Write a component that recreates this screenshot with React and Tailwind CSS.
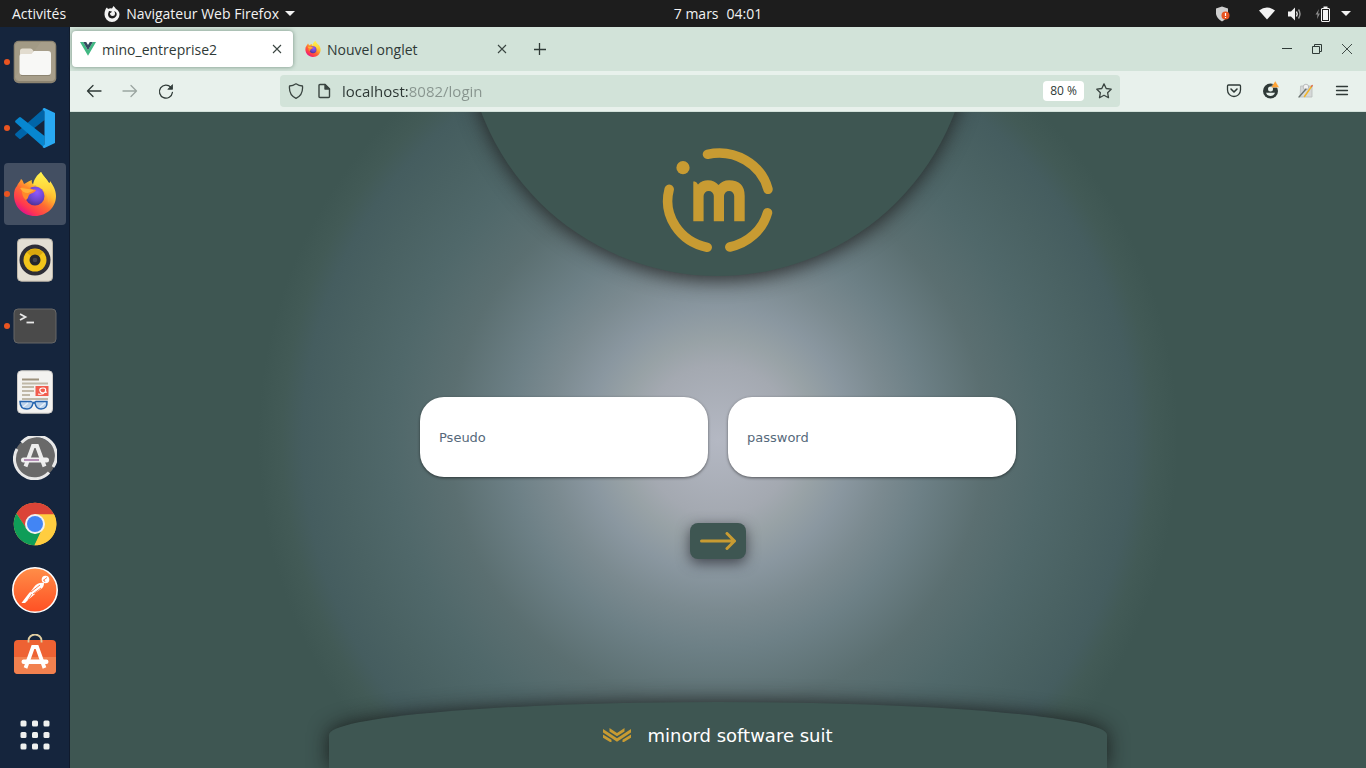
import React from 'react';

function VueLogo() {
  return (
    <svg viewBox="0 0 16 14" className="h-3.5 w-4 shrink-0" aria-hidden="true">
      <path d="M0 0h3.2L8 8.2 12.8 0H16L8 13.8z" fill="#41b883" />
      <path d="M3.2 0h3L8 3.1 9.8 0h3L8 8.3z" fill="#35495e" />
    </svg>
  );
}

function FirefoxLogo({ id, className }) {
  return (
    <svg viewBox="0 0 44 44" className={className} aria-hidden="true">
      <defs>
        <linearGradient id={id + 'a'} x1="0.85" y1="0.1" x2="0.25" y2="0.95">
          <stop offset="0" stopColor="#fff14f" />
          <stop offset="0.35" stopColor="#ffbd2e" />
          <stop offset="0.6" stopColor="#ff6a33" />
          <stop offset="0.85" stopColor="#ff3750" />
          <stop offset="1" stopColor="#e31587" />
        </linearGradient>
        <radialGradient id={id + 'b'} cx="0.6" cy="0.3" r="0.75">
          <stop offset="0" stopColor="#9059ff" />
          <stop offset="0.6" stopColor="#6b45c9" />
          <stop offset="1" stopColor="#4b2f8e" />
        </radialGradient>
        <linearGradient id={id + 'c'} x1="0.5" y1="0" x2="0.5" y2="1">
          <stop offset="0" stopColor="#fff44f" />
          <stop offset="0.6" stopColor="#ffd23a" />
          <stop offset="1" stopColor="#ff9a30" />
        </linearGradient>
      </defs>
      <path
        d="M4 14C5 11 7 10 8 7c2 1 2 3 3 5 3-1 4-3 8-4-1 3 1 5 5 6V8c1-4 3-6 4-8 2 4 6 7 8 11 1 0 1-1 1-2 3 4 6 9 6 15 0 11-9 20-21 20S1 35 1 23c0-4 1-7 3-9z"
        fill={'url(#' + id + 'a)'}
      />
      <path d="M20 13c1-6 4-10 8-13 2 5 8 8 9 15 2 5 2 12-2 16 1-9-5-16-15-18z" fill={'url(#' + id + 'c)'} />
      <circle cx="22" cy="24" r="9.500" fill={'url(#' + id + 'b)'} />
      <path d="M8 15c3-1 7 0 9 1 2 2 4 1 6 2-1 3-5 3-7 5-1 2-1 4-3 5-4-3-4-8-5-13z" fill="#ff8a2b" />
      <path d="M7 16c4 0 8 1 14 2-2 2-5 2-6 3-4 0-6-2-8-5z" fill="#ffb13b" />
    </svg>
  );
}

function FilesIcon() {
  return (
    <svg viewBox="0 0 44 44" className="size-11" aria-hidden="true">
      <rect x="0.7" y="0.7" width="42.600" height="42.600" rx="5" fill="#8c8471" />
      <rect x="2" y="2" width="40" height="39" rx="4" fill="#a29a85" />
      <path d="M28 2h10q4 0 4 4v31q0 4-4 4H6L2 37z" fill="#aaa28d" opacity="0.6" />
      <path d="M7 11q0-2.500 2.500-2.500h8q1.500 0 2.300 1.500l1.200 2H35v6H7z" fill="#e2dccf" />
      <path d="M6.500 16q0-2 2-2h10l2.500-3H35q3 0 3 3v18q0 3-3 3H9.500q-3 0-3-3z" fill="#f8f8f6" />
      <path d="M8 35.500h29" stroke="#8c8471" strokeWidth="1" />
    </svg>
  );
}

function CodeIcon() {
  return (
    <svg viewBox="0 0 44 44" className="size-11" aria-hidden="true">
      <path d="M31.500 2v12L8 32.500q-1 1-2 0l-3.500-3q-1-1 0-2z" fill="#0065a9" />
      <path d="M31.500 42V30L8 11.500q-1-1-2 0l-3.500 3q-1 1 0 2z" fill="#0787d0" />
      <path d="M31.500 2L42 7v30l-10.500 5q-1 0-2-1l2-2.500V5.500l-2-2.500q1-1 2-1z" fill="#29a9f3" />
    </svg>
  );
}

function RhythmboxIcon() {
  return (
    <svg viewBox="0 0 44 44" className="size-11" aria-hidden="true">
      <rect x="4.500" y="0.800" width="35" height="42.400" rx="4" fill="#e4dfd4" stroke="#bdb6a8" />
      <circle cx="22" cy="22" r="15.500" fill="#2e2e38" />
      <circle cx="22" cy="22" r="11.500" fill="#f3c51a" />
      <path d="M22 22L14 14.500A11 11 0 0 1 30 14.500z" fill="#d9a60d" />
      <circle cx="22" cy="22" r="5.500" fill="#25252b" />
      <circle cx="22" cy="22" r="2.300" fill="#44444c" />
    </svg>
  );
}

function TerminalIcon() {
  return (
    <svg viewBox="0 0 44 44" className="size-11" aria-hidden="true">
      <rect x="1" y="5" width="42" height="34" rx="4" fill="#4a4a4a" stroke="#666" />
      <path d="M7 10l5.500 3L7 16" fill="none" stroke="#e9e9e9" strokeWidth="1.800" />
      <path d="M13.500 18.500H21" stroke="#e9e9e9" strokeWidth="1.800" />
    </svg>
  );
}

function ReaderIcon() {
  return (
    <svg viewBox="0 0 44 44" className="size-11" aria-hidden="true">
      <rect x="4.500" y="0.800" width="35" height="42.400" rx="4" fill="#f3f2f0" stroke="#cfccc8" />
      <path d="M9 9.500h17" stroke="#9c917d" strokeWidth="2" />
      <path d="M9 13.500h26M9 17h12M9 21h12M9 25h8M9 29h26" stroke="#c0b8a8" strokeWidth="1.800" />
      <rect x="22.500" y="16" width="13" height="10" fill="#f15c4e" />
      <path d="M25 24q5 1 7-2 2-4-2-4-4 0-3 3t7 1" fill="none" stroke="#fff" strokeWidth="1.200" />
      <path d="M7 31.500h11q3 2 5 0h11q.5 7.500-6 7.500-5 0-6-6h-2q-1 6-6 6-7 0-7-7.500z" fill="#bcd2ea" stroke="#2564ae" strokeWidth="1.500" />
      <path d="M10 37l5-4M27 37l5-4" stroke="#e8f1fa" strokeWidth="1.500" />
    </svg>
  );
}

function UpdaterIcon() {
  return (
    <svg viewBox="0 0 44 44" className="size-11" aria-hidden="true">
      <circle cx="22" cy="22" r="21" fill="#696969" />
      <path d="M8.500 6.500A20 20 0 0 1 40 31M36 36.500A20 20 0 0 1 4 13" fill="none" stroke="#e8e8e8" strokeWidth="3" />
      <path d="M12.500 30.500L20 10h4l7.500 20.500" fill="none" stroke="#ececec" strokeWidth="4" />
      <rect x="8" y="21.500" width="28" height="5" rx="2.500" fill="#f0f0f0" />
      <path d="M11 24h15" stroke="#8d4f8f" strokeWidth="1.200" />
    </svg>
  );
}

function ChromeIcon() {
  return (
    <svg viewBox="0 0 44 44" className="size-11" aria-hidden="true">
      <circle cx="22" cy="22" r="21.300" fill="#ffcd40" />
      <path d="M3.500 11.500A21.300 21.300 0 0 1 41 12.500H22L13.500 27z" fill="#db4437" />
      <path d="M3.500 11.500L13.800 27l8.200 5 6-3-6.500 14.300A21.300 21.300 0 0 1 3.500 11.500z" fill="#0f9d58" />
      <path d="M22 12.500h19.200A21.300 21.300 0 0 1 21.500 43.300l9-16.300z" fill="#ffcd40" />
      <circle cx="22" cy="22" r="10" fill="#f1f1f1" />
      <circle cx="22" cy="22" r="8" fill="#4285f4" />
    </svg>
  );
}

function PostmanIcon() {
  return (
    <svg viewBox="0 0 46 46" className="size-[46px]" aria-hidden="true">
      <defs>
        <linearGradient id="postman" x1="0" y1="0" x2="0" y2="1">
          <stop offset="0" stopColor="#ff8e48" />
          <stop offset="1" stopColor="#ff5024" />
        </linearGradient>
      </defs>
      <circle cx="23" cy="23" r="22.200" fill="url(#postman)" stroke="#fff" strokeWidth="1.600" />
      <circle cx="33.500" cy="12.500" r="3.800" fill="#fff" />
      <path d="M32 16q-6-1-10 4l-5 7 3 1 9-6q3-2 3-6z" fill="#fff" />
      <path d="M17.500 25.500l-5 6.500-3 4h3.500l3-3 7-6" fill="#fff" />
      <path d="M31 13.500l4-3M33 15l-1-2M19 25l9-7M21 27l8-6M16 33l4-6" stroke="#ff7440" strokeWidth="0.900" />
    </svg>
  );
}

function SoftwareIcon() {
  return (
    <svg viewBox="0 0 44 44" className="size-11" aria-hidden="true">
      <rect x="1" y="6" width="42" height="34" rx="4" fill="#ee6233" />
      <path d="M1 23h42v13q0 4-4 4H5q-4 0-4-4z" fill="#f2814f" />
      <path d="M15.500 8.500V6.500a6.500 6 0 0 1 13 0v2" fill="none" stroke="#e2cfa2" strokeWidth="1.800" />
      <path d="M12.500 34L20 13h4L31.500 34" fill="none" stroke="#fff" strokeWidth="3.800" />
      <rect x="8.500" y="25.500" width="27" height="4.500" rx="2.200" fill="#fff" />
    </svg>
  );
}

function AppsGridIcon() {
  return (
    <svg viewBox="0 0 30 30" className="size-[30px]" fill="#f0f0ee" aria-hidden="true">
      {[0.5, 12, 23.5].map((y) =>
        [0.5, 12, 23.5].map((x) => <rect key={x + '-' + y} x={x} y={y} width="6" height="6" rx="1.500" />)
      )}
    </svg>
  );
}

const apps = [
  { name: 'Fichiers', icon: <FilesIcon />, running: true },
  { name: 'Visual Studio Code', icon: <CodeIcon />, running: true },
  { name: 'Firefox', icon: <FirefoxLogo id="dockfx" className="size-11" />, running: true, active: true },
  { name: 'Rhythmbox', icon: <RhythmboxIcon /> },
  { name: 'Terminal', icon: <TerminalIcon />, running: true },
  { name: 'Documents', icon: <ReaderIcon /> },
  { name: 'Mises à jour', icon: <UpdaterIcon /> },
  { name: 'Chrome', icon: <ChromeIcon /> },
  { name: 'Postman', icon: <PostmanIcon /> },
  { name: 'Logiciels', icon: <SoftwareIcon /> },
];

function TopBar() {
  return (
    <header className="grid h-[27px] shrink-0 grid-cols-[1fr_auto_1fr] items-center bg-[#1d1d1d] text-[14px] leading-5 text-[#f2f2f2]">
      <div className="flex items-center gap-[38px] pl-3">
        <button type="button">Activités</button>
        <button type="button" className="flex items-center gap-1.5">
          <svg viewBox="0 0 16 16" className="size-4" aria-hidden="true">
            <path d="M1.500 3.500Q2 2 3 1.500l1 1.500q2-1 4-.6L9.500 0Q11 1.500 12 3q3.500 2 3.500 5.500a7.500 7.500 0 0 1-15 0Q.5 5.500 1.500 3.500z" fill="#f2f2f2" />
            <path d="M5 5l3 .5Q7 7 6 7q0 3 2.500 3T11 7.500Q11 6 10 5q3.500 1 2.500 4.500Q11 12.500 8 12.500 4 12 4 8z" fill="#1d1d1d" />
          </svg>
          <span>Navigateur Web Firefox</span>
          <svg viewBox="0 0 10 5" className="h-[5px] w-2.5" aria-hidden="true">
            <path d="M0 0h10L5 5z" fill="#f2f2f2" />
          </svg>
        </button>
      </div>
      <button type="button" className="ml-[70px] flex gap-2">
        <span>7 mars</span>
        <span>04:01</span>
      </button>
      <div className="flex items-center justify-end pr-[15px]">
        <svg viewBox="0 0 16 16" className="mr-7 size-4" aria-hidden="true">
          <path d="M7 .5l6 2V8q-1 5-6 7.500Q2 13 1 8V2.500z" fill="#cfcfcf" />
          <circle cx="10.500" cy="9.500" r="4" fill="#e95420" />
          <path d="M10.500 7v3M10.500 11v1" stroke="#fff" strokeWidth="1.200" />
        </svg>
        <svg viewBox="0 0 16 13" className="mr-3 h-[13px] w-4" aria-hidden="true">
          <path d="M0 3.500Q8-2.500 16 3.500L8 12.500z" fill="#f2f2f2" />
        </svg>
        <svg viewBox="0 0 16 16" className="mr-3 size-4" aria-hidden="true">
          <path d="M1 5.500h3l4-4v13l-4-4H1z" fill="#f2f2f2" />
          <path d="M9.500 5.500q1.500 2.500 0 5" fill="none" stroke="#f2f2f2" strokeWidth="1.400" />
          <path d="M11.500 3.500q3 4.500 0 9" fill="none" stroke="#999" strokeWidth="1.400" />
        </svg>
        <svg viewBox="0 0 16 16" className="mr-2.5 size-4" aria-hidden="true">
          <path d="M4 3L.5 8.500h2L2 13l3-5.500H3z" fill="#8c8c8c" />
          <path d="M8.500 1.500h4" stroke="#f2f2f2" strokeWidth="2" />
          <rect x="6.500" y="2.500" width="8" height="13" rx="0.500" fill="#1d1d1d" stroke="#f2f2f2" />
          <rect x="8" y="4" width="5" height="10" fill="#f2f2f2" />
        </svg>
        <svg viewBox="0 0 10 5" className="h-[5px] w-2.5" aria-hidden="true">
          <path d="M0 0h10L5 5z" fill="#f2f2f2" />
        </svg>
      </div>
    </header>
  );
}

function Dock() {
  return (
    <nav aria-label="Applications" className="flex w-[70px] shrink-0 flex-col gap-1 border-r border-[#101a2c] bg-[#15253d] px-1 pt-1 pb-0.5">
      {apps.map((app) => (
        <button
          key={app.name}
          type="button"
          aria-label={app.name}
          className={
            'relative flex h-[62px] w-[62px] shrink-0 items-center justify-center rounded-sm ' +
            (app.active ? 'bg-[#434f62]' : '')
          }
        >
          {app.running && <span className="absolute top-7 left-0 size-1.5 rounded-full bg-[#e95420]" />}
          {app.icon}
        </button>
      ))}
      <button type="button" aria-label="Afficher les applications" className="mt-auto flex h-[62px] w-[62px] items-center justify-center">
        <AppsGridIcon />
      </button>
    </nav>
  );
}

function CloseIcon() {
  return (
    <svg viewBox="0 0 10 10" className="size-2.5" fill="none" stroke="#3a4541" strokeWidth="1.100" aria-hidden="true">
      <path d="M1 1l8 8M9 1L1 9" />
    </svg>
  );
}

function TabBar() {
  return (
    <div className="flex h-11 shrink-0 items-center bg-[#d2e3d9] pl-0.5 text-[14px] text-[#2f3a37]">
      <div className="flex h-9 w-[221px] items-center rounded-sm bg-white pr-[11px] pl-2 shadow-[0_0_4px_rgba(60,90,75,0.6)]">
        <button type="button" className="flex flex-1 items-center gap-1.5">
          <VueLogo />
          <span>mino_entreprise2</span>
        </button>
        <button type="button" aria-label="Fermer mino_entreprise2"><CloseIcon /></button>
      </div>
      <div className="flex h-9 w-[225px] items-center pr-[11px] pl-3">
        <button type="button" className="flex flex-1 items-center gap-1.5">
          <FirefoxLogo id="tabfx" className="size-4" />
          <span>Nouvel onglet</span>
        </button>
        <button type="button" aria-label="Fermer Nouvel onglet"><CloseIcon /></button>
      </div>
      <button type="button" aria-label="Ouvrir un nouvel onglet" className="ml-4">
        <svg viewBox="0 0 12 12" className="size-3" stroke="#2f3a37" strokeWidth="1.300" aria-hidden="true">
          <path d="M5.500 0v12M0 6.500h12" />
        </svg>
      </button>
      <div className="ml-auto flex items-center gap-5 pr-3.5">
        <button type="button" aria-label="Réduire">
          <svg viewBox="0 0 10 10" className="size-2.5" stroke="#2f3a37" aria-hidden="true"><path d="M0 4.500h10" /></svg>
        </button>
        <button type="button" aria-label="Restaurer">
          <svg viewBox="0 0 10 10" className="size-2.5" fill="none" stroke="#2f3a37" aria-hidden="true">
            <path d="M.5 2.500h7v7h-7zM2.500 2.500v-2h7v7h-2" />
          </svg>
        </button>
        <button type="button" aria-label="Fermer">
          <svg viewBox="0 0 10 10" className="size-2.5" stroke="#2f3a37" strokeWidth="0.900" aria-hidden="true"><path d="M0 0l10 10M10 0L0 10" /></svg>
        </button>
      </div>
    </div>
  );
}

function ToolButton({ label, children }) {
  return (
    <button type="button" aria-label={label} className="flex h-8 w-9 shrink-0 items-center justify-center">
      <svg viewBox="0 0 16 16" className="size-4 overflow-visible" fill="none" stroke="#2f3a37" strokeWidth="1.300" strokeLinecap="round" strokeLinejoin="round" aria-hidden="true">
        {children}
      </svg>
    </button>
  );
}

function NavBar() {
  return (
    <div className="flex h-[41px] shrink-0 items-center border-b border-[#d2e0d9] bg-[#e8f1ec] px-1.5 text-[#2f3a37]">
      <ToolButton label="Précédent"><path d="M1.500 8h13.500M7 2.500L1.500 8 7 13.500" /></ToolButton>
      <ToolButton label="Suivant"><path d="M1 8h13.500M9 2.500L14.500 8 9 13.500" stroke="#9ba6a1" /></ToolButton>
      <ToolButton label="Actualiser">
        <path d="M14.400 9.500A6.500 6.500 0 1 1 12.800 4.300" />
        <path d="M14.500 2v4.300h-4.300z" fill="#2f3a37" strokeWidth="0.800" />
      </ToolButton>
      <div className="mx-24 flex h-8 min-w-0 flex-1 items-center rounded-sm bg-[#d2e3d9] px-2">
        <svg viewBox="0 0 16 16" className="size-4 shrink-0" fill="none" stroke="#3a4541" strokeWidth="1.300" strokeLinejoin="round" aria-hidden="true">
          <path d="M8 .8q3 2 6.500 2.200.8 9-6.500 12.300Q.7 12 1.500 3 5 2.800 8 .8z" />
        </svg>
        <svg viewBox="0 0 16 16" className="ml-3 size-4 shrink-0" fill="none" stroke="#3a4541" strokeWidth="1.400" strokeLinejoin="round" aria-hidden="true">
          <path d="M4 1.500h5l4.500 4.500v7.500q0 1-1 1H4q-1 0-1-1v-11q0-1 1-1z" />
          <path d="M9 1.500V6h4.500z" fill="#3a4541" />
        </svg>
        <input
          type="text"
          aria-label="Adresse"
          defaultValue="localhost:8082/login"
          className="ml-2.5 min-w-0 flex-1 bg-[linear-gradient(90deg,#2b3532_66px,#87948e_66px)] bg-clip-text text-[15px] text-transparent outline-none"
        />
        <button type="button" className="h-5 rounded-sm bg-white px-[7px] text-[12px] leading-5 whitespace-nowrap">80 %</button>
        <button type="button" aria-label="Marquer cette page" className="ml-3">
          <svg viewBox="0 0 16 16" className="size-4" fill="none" stroke="#3a4541" strokeWidth="1.300" strokeLinejoin="round" aria-hidden="true">
            <path d="M8 .9l2.200 4.600 5 .7-3.600 3.500.9 5L8 12.300l-4.500 2.400.9-5L.8 6.200l5-.7z" />
          </svg>
        </button>
      </div>
      <ToolButton label="Pocket">
        <path d="M2.500 2h11q1 0 1 1v4a6.500 6.500 0 0 1-13 0V3q0-1 1-1z" />
        <path d="M5 6l3 3 3-3" strokeWidth="1.600" />
      </ToolButton>
      <ToolButton label="Compte">
        <circle cx="8.500" cy="8" r="7.500" fill="#2f3a37" stroke="none" />
        <circle cx="8.500" cy="6" r="2.500" fill="#e8f1ec" stroke="none" />
        <path d="M4 9.800h9q-1.500 3.200-4.500 3.200T4 9.800z" fill="#e8f1ec" stroke="none" />
        <path d="M13.300 -2l4 6.500h-8z" fill="#ffa436" stroke="#e8f1ec" strokeWidth="0.400" />
      </ToolButton>
      <ToolButton label="Extension">
        <path d="M3 3h11v11H2.500z" fill="#d5d8d8" stroke="#b7bcbb" strokeWidth="0.800" />
        <circle cx="8" cy="4" r="2.800" fill="#f1f1f1" stroke="#aeb3b2" strokeWidth="0.800" />
        <path d="M1 14L8 6" stroke="#6a7370" strokeWidth="1.300" />
        <path d="M6.500 13.500l7-10" stroke="#f0b429" strokeWidth="1.500" />
        <path d="M13.500 3.500l.8-1" stroke="#dd6b4b" strokeWidth="1.300" />
      </ToolButton>
      <ToolButton label="Menu"><path d="M2.500 3.500h11M2.500 7.500h11M2.500 11.500h11" /></ToolButton>
    </div>
  );
}

function MinoLogo() {
  return (
    <svg viewBox="0 0 116 110" className="h-[110px] w-[116px]" role="img" aria-label="mino">
      <g fill="none" stroke="#c89b32" strokeWidth="9.500" strokeLinecap="round">
        <path d="M47.500 9.300A50.500 47.600 0 0 1 108 44.300" />
        <path d="M107.500 67.700A50.500 47.600 0 0 1 69.800 102" />
        <path d="M47.200 102.300A50.500 47.600 0 0 1 9.200 44.300" />
      </g>
      <circle cx="23" cy="22.700" r="6.600" fill="#c89b32" />
      <path
        d="M33.300 36.500h1.500q2 .5 3.200 3 4-4.200 10-4.200 6.500 0 10.500 4.800 4-4.800 10.500-4.800 15.700 0 15.700 15.700v25.300H74.200V51a5 5 0 0 0-10.200 0v25.300H53.800V51a5 5 0 0 0-10.200 0v25.300H33.300z"
        fill="#c89b32"
      />
    </svg>
  );
}

function Field({ id, label, type }) {
  return (
    <input
      id={id}
      name={id}
      type={type}
      aria-label={label}
      placeholder={label}
      className="h-20 min-w-0 flex-1 rounded-3xl bg-white px-[19px] text-[13px] text-[#2c3e50] shadow-[0_1px_3px_rgba(0,0,0,0.5)] outline-none placeholder:text-[#56697b]"
    />
  );
}

function LoginPage() {
  return (
    <main className="flex min-h-0 flex-1 flex-col items-center justify-between overflow-hidden bg-[radial-gradient(circle_at_center,#b4b8c3_0px,#a4a9b1_75px,#98a2a6_100px,#8a97a0_132px,#7b8a90_170px,#6d8086_208px,#5b6f71_268px,#50686a_325px,#4a6263_375px,#455d5f_415px,#425a56_436px,#3e5652_460px)] font-['DejaVu_Sans',sans-serif]">
      <div className="-mt-[342px] flex size-[506px] shrink-0 items-end justify-center rounded-full bg-[#3e5652] pb-[21px] shadow-[0_4px_20px_rgba(30,30,30,0.85)]">
        <MinoLogo />
      </div>
      <form className="flex w-[596px] max-w-full flex-col items-center gap-[46px] pb-[22px]" onSubmit={(e) => e.preventDefault()}>
        <div className="flex w-full gap-5">
          <Field id="pseudo" label="Pseudo" type="text" />
          <Field id="password" label="password" type="password" />
        </div>
        <button type="submit" aria-label="Se connecter" className="flex h-9 w-14 items-center justify-center rounded-lg bg-[#3e5652] shadow-[0_4px_14px_rgba(30,30,40,0.7)]">
          <svg viewBox="0 0 36 18" className="h-[18px] w-9" fill="none" stroke="#c89b32" strokeWidth="3" strokeLinecap="round" strokeLinejoin="round" aria-hidden="true">
            <path d="M1.500 9h33M27 1.500L34.500 9 27 16.500" />
          </svg>
        </button>
      </form>
      <footer className="flex h-[66px] w-3/5 shrink-0 items-center justify-center gap-4 rounded-t-[50%] bg-[#3e5652] text-[18px] text-white shadow-[0_0_20px_rgba(20,20,20,0.85)]">
        <svg viewBox="0 0 28 14" className="h-3.5 w-7" fill="#c89b32" aria-hidden="true">
          <path d="M6.500 0L14 5 21.500 0v3.400L14 8.200 6.500 3.400zM0 1l14 9.200L28 1v3.400L14 13.800 0 4.400zM0 6.500l8.500 5.200V14H7L0 9.700zM28 6.500l-8.500 5.200V14H21l7-4.300z" />
        </svg>
        <span>minord software suit</span>
      </footer>
    </main>
  );
}

export default function App() {
  return (
    <div className="flex h-screen flex-col overflow-hidden font-['Open_Sans','Noto_Sans',sans-serif]">
      <TopBar />
      <div className="flex min-h-0 flex-1">
        <Dock />
        <div className="flex min-w-0 flex-1 flex-col">
          <TabBar />
          <NavBar />
          <LoginPage />
        </div>
      </div>
    </div>
  );
}
